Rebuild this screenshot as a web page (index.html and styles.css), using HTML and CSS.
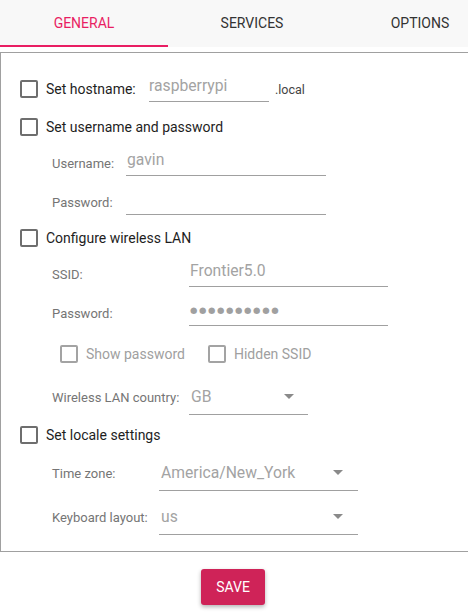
FILE: index.html
```html
<!DOCTYPE html>
<html lang="en">
<head>
<meta charset="utf-8">
<title>OS Customisation</title>
<link rel="stylesheet" href="styles.css">
</head>
<body>
<nav class="tabs">
  <div class="tab tab--active">General</div>
  <div class="tab">Services</div>
  <div class="tab">Options</div>
</nav>

<section class="panel">
  <div class="check-row">
    <span class="checkbox"></span>
    <span class="check-label host-label">Set hostname:</span>
    <div class="field host-field">raspberrypi</div>
    <span class="suffix">.local</span>
  </div>

  <div class="check-row gap-12">
    <span class="checkbox"></span>
    <span class="check-label">Set username and password</span>
  </div>
  <div class="field-row gap-10">
    <span class="field-label user-label">Username:</span>
    <div class="field user-field">gavin</div>
  </div>
  <div class="field-row gap-13">
    <span class="field-label user-label">Password:</span>
    <div class="field user-field"></div>
  </div>

  <div class="check-row gap-10">
    <span class="checkbox"></span>
    <span class="check-label">Configure wireless LAN</span>
  </div>
  <div class="field-row gap-10">
    <span class="field-label wifi-label">SSID:</span>
    <div class="field wifi-field">Frontier5.0</div>
  </div>
  <div class="field-row gap-13">
    <span class="field-label wifi-label">Password:</span>
    <div class="field wifi-field field--secret">●●●●●●●●●●</div>
  </div>
  <div class="option-row gap-15">
    <label class="option"><span class="checkbox checkbox--disabled"></span>Show password</label>
    <label class="option"><span class="checkbox checkbox--disabled"></span>Hidden SSID</label>
  </div>
  <div class="field-row select-row gap-12">
    <span class="field-label wifi-label">Wireless LAN country:</span>
    <div class="select country-select">GB<svg class="arrow" width="10" height="5" viewBox="0 0 10 5"><path d="M0 0H10L5 5Z"/></svg></div>
  </div>

  <div class="check-row gap-7">
    <span class="checkbox"></span>
    <span class="check-label">Set locale settings</span>
  </div>
  <div class="field-row select-row gap-7">
    <span class="field-label locale-label">Time zone:</span>
    <div class="select locale-select">America/New_York<svg class="arrow" width="10" height="5" viewBox="0 0 10 5"><path d="M0 0H10L5 5Z"/></svg></div>
  </div>
  <div class="field-row select-row gap-8">
    <span class="field-label locale-label">Keyboard layout:</span>
    <div class="select locale-select">us<svg class="arrow" width="10" height="5" viewBox="0 0 10 5"><path d="M0 0H10L5 5Z"/></svg></div>
  </div>
</section>

<div class="actions">
  <button class="save">Save</button>
</div>
</body>
</html>
```

FILE: styles.css
```css
html, body {
  margin: 0;
  overflow: hidden;
}

body {
  width: 468px;
  height: 612px;
  background: #ffffff;
  font-family: Roboto, "Noto Sans", sans-serif;
  color: #222222;
}

.tabs {
  display: flex;
  width: 504px;
  height: 47px;
  background: #f8f8f8;
}

.tab {
  flex: none;
  width: 168px;
  box-sizing: border-box;
  height: 47px;
  padding-top: 1px;
  line-height: 44px;
  text-align: center;
  font-size: 14px;
  text-transform: uppercase;
  color: #333333;
  border-bottom: 2px solid transparent;
}

.tab--active {
  color: #e91e63;
  border-bottom-color: #e91e63;
}

.panel {
  margin-top: 5px;
  border: 1px solid #a0a0a0;
  border-right: none;
  padding: 23px 0 16px 0;
}

.check-row,
.field-row,
.option-row {
  display: flex;
  align-items: center;
  height: 26px;
}

.check-row {
  padding-left: 19px;
}

.field-row {
  padding-left: 51px;
}

.select-row {
  height: 36px;
}

.option-row {
  padding-left: 59px;
}

.gap-7 { margin-top: 7px; }
.gap-8 { margin-top: 8px; }
.gap-10 { margin-top: 10px; }
.gap-12 { margin-top: 12px; }
.gap-13 { margin-top: 13px; }
.gap-15 { margin-top: 15px; }

.checkbox {
  flex: none;
  width: 18px;
  height: 18px;
  box-sizing: border-box;
  border: 2px solid #6e6e6e;
  border-radius: 2px;
  margin-right: 8px;
}

.checkbox--disabled {
  border-color: #a3a3a3;
}

.check-label {
  font-size: 14px;
  color: #1e1e1e;
}

.host-label {
  width: 103px;
  flex: none;
}

.field {
  flex: none;
  box-sizing: border-box;
  height: 26px;
  line-height: 20px;
  border-bottom: 1px solid #a0a0a0;
  font-size: 15.7px;
  color: #a3a3a3;
  padding-left: 1px;
}

.host-field {
  width: 120px;
  padding-left: 0;
}

.suffix {
  margin-left: 6px;
  font-size: 12.5px;
  color: #444444;
}

.field-label {
  flex: none;
  font-size: 13px;
  color: #757575;
}

.user-label { width: 74px; }
.wifi-label { width: 137px; }
.locale-label { width: 107px; }

.user-field { width: 200px; }
.wifi-field { width: 199px; }

.field--secret {
  font-family: "DejaVu Sans", sans-serif;
  font-size: 8.5px;
  letter-spacing: 1.6px;
  line-height: 20px;
  color: #a0a0a0;
}

.option {
  display: flex;
  align-items: center;
  font-size: 14px;
  color: #a0a0a0;
  margin-right: 23px;
}

.select {
  flex: none;
  box-sizing: border-box;
  height: 36px;
  line-height: 35px;
  border-bottom: 1px solid #a0a0a0;
  font-size: 15.7px;
  color: #a3a3a3;
  padding-left: 2px;
  display: flex;
  align-items: center;
  justify-content: space-between;
  padding-right: 14px;
}

.country-select { width: 119px; }
.locale-select { width: 199px; padding-right: 15px; }

.arrow {
  fill: #8a8a8a;
}

.actions {
  display: flex;
  justify-content: center;
  margin-top: 17px;
  padding-right: 2px;
}

.save {
  width: 64px;
  height: 36px;
  border: none;
  border-radius: 3px;
  background: #cf2358;
  color: #ffffff;
  font-family: Roboto, sans-serif;
  font-size: 14px;
  text-transform: uppercase;
  box-shadow: 0 2px 4px rgba(0, 0, 0, 0.3);
}
```
